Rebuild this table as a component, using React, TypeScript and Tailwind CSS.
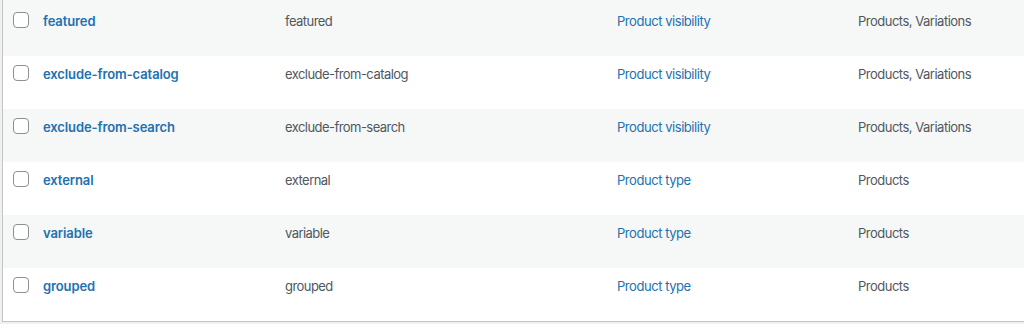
import React from "react";

const rows = [
  { name: "featured", slug: "featured", type: "Product visibility", usage: "Products, Variations" },
  { name: "exclude-from-catalog", slug: "exclude-from-catalog", type: "Product visibility", usage: "Products, Variations" },
  { name: "exclude-from-search", slug: "exclude-from-search", type: "Product visibility", usage: "Products, Variations" },
  { name: "external", slug: "external", type: "Product type", usage: "Products" },
  { name: "variable", slug: "variable", type: "Product type", usage: "Products" },
  { name: "grouped", slug: "grouped", type: "Product type", usage: "Products" },
];

export default function App() {
  return (
    <div
      className="w-[1024px] h-[324px] bg-[#f0f0f1] overflow-hidden pl-[2px]"
      style={{ fontFamily: "Inter, 'Liberation Sans', sans-serif" }}
    >
      <div className="border-l border-b border-[#c3c4c7] bg-white text-[13px] leading-[20px]">
        <div className="h-[3px] bg-[#f6f7f7]" />
        {rows.map((r, i) => (
          <div
            key={r.name}
            className={`flex h-[53px] ${i % 2 === 0 ? "bg-[#f6f7f7]" : "bg-white"}`}
          >
            <div className="w-[40px] shrink-0 pt-[9px] pl-[10px]">
              <div className="w-[16px] h-[16px] rounded-[4px] border border-[#8c8f94] bg-white" />
            </div>
            <div className="w-[242px] shrink-0 pt-[8px] font-semibold tracking-[-0.1px] text-[#2271b1]">{r.name}</div>
            <div className="w-[332px] shrink-0 pt-[8px] tracking-[-0.55px] text-[#50575e]">{r.slug}</div>
            <div className="w-[241px] shrink-0 pt-[8px] tracking-[-0.45px] text-[#2271b1]">{r.type}</div>
            <div className="flex-1 pt-[8px] tracking-[-0.5px] text-[#50575e]">{r.usage}</div>
          </div>
        ))}
      </div>
    </div>
  );
}
